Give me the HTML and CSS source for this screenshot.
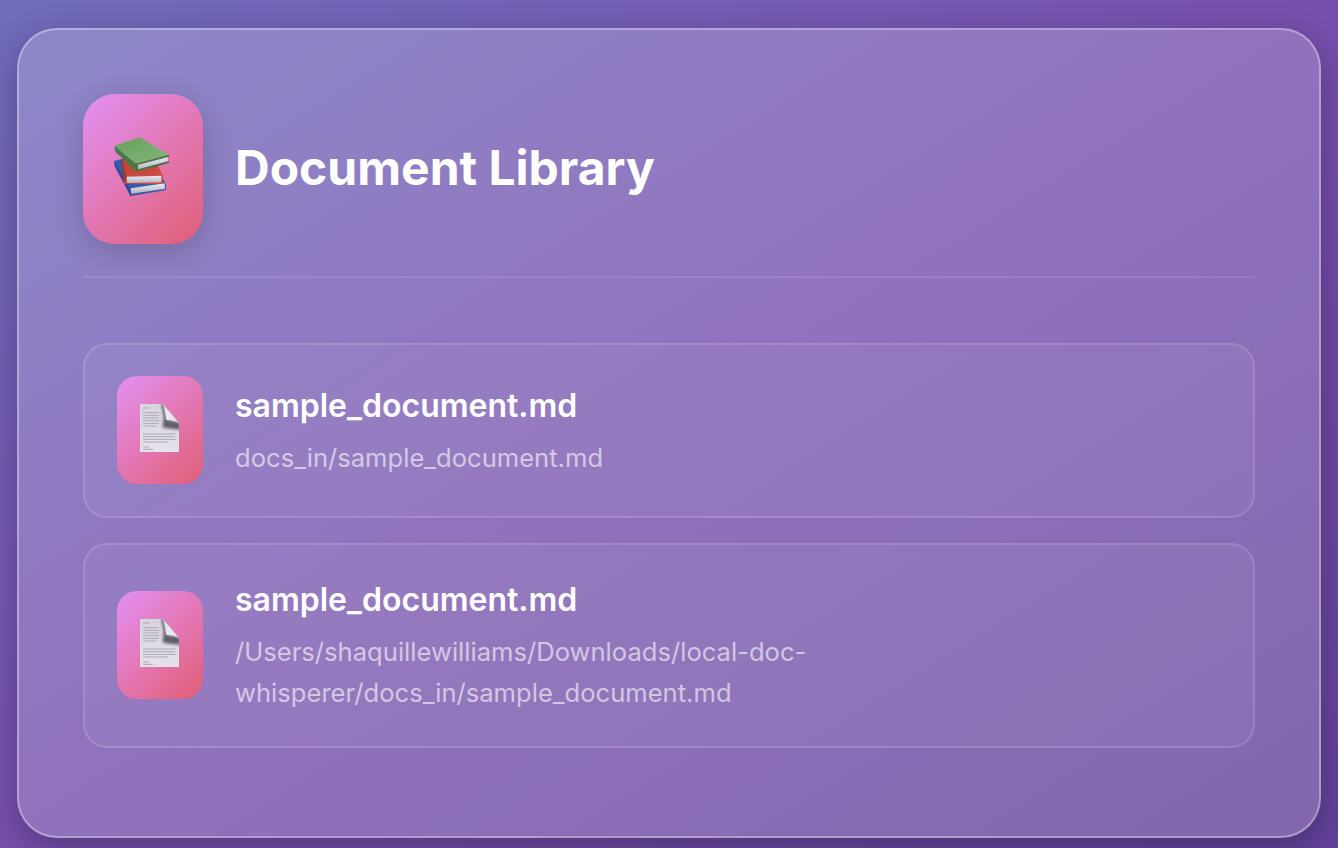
FILE: index.html
```
<!DOCTYPE html>
<html lang="en">
<head>
<meta charset="utf-8">
<title>Document Library</title>
<link rel="stylesheet" href="styles.css">
</head>
<body>
<main class="panel">
  <header class="head">
    <div class="badge badge-lg">
      <svg class="books" viewBox="0 0 198 210" width="66" height="70" aria-hidden="true">
        <defs>
          <linearGradient id="gr" x1="0" y1="0" x2="1" y2="1"><stop offset="0" stop-color="#5fa64e"/><stop offset="1" stop-color="#86bd70"/></linearGradient>
          <linearGradient id="pg" x1="0" y1="0" x2="0" y2="1"><stop offset="0" stop-color="#f8f8f8"/><stop offset="1" stop-color="#bcbcbc"/></linearGradient>
          <linearGradient id="re" x1="0" y1="0" x2="1" y2="1"><stop offset="0" stop-color="#c23a25"/><stop offset="1" stop-color="#dc4a35"/></linearGradient>
          <filter id="edge" x="-5%" y="-5%" width="110%" height="110%"><feGaussianBlur stdDeviation="0.8"/></filter>
        </defs>
        <g filter="url(#edge)">
          <path d="M18 84 L42 78 L160 128 L174 154 L174 171 L66 190 L60 172 Z" fill="#2d52aa"/>
          <path d="M18 84 L66 170 L68 190 L20 100 Z" fill="#213d8c"/>
          <path d="M68 166 L170 151 L171 167 L70 182 Z" fill="url(#pg)"/>
          <path d="M42 76 L150 98 L165 128 L164 153 L48 152 Z" fill="url(#re)"/>
          <path d="M42 76 L56 131 L48 152 L41 98 Z" fill="#a42e1d"/>
          <path d="M56 131 L160 128 L160 148 L58 150 Z" fill="url(#pg)"/>
          <path d="M20 38 L95 13 L183 65 L83 92 Z" fill="url(#gr)"/>
          <path d="M20 38 L83 92 L85 116 L22 56 Z" fill="#3c7a33"/>
          <path d="M85 95 L179 71 L179 85 L88 111 Z" fill="url(#pg)"/>
          <path d="M83 92 L183 65 L183 71 L90 95 L90 109 L183 84 L183 90 L85 116 Z" fill="#3a7631"/>
        </g>
      </svg>
    </div>
    <h1 class="title">Document Library</h1>
  </header>
  <section class="list">
    <article class="item">
      <div class="badge badge-sm">
        <svg class="doc" viewBox="0 0 150 168" width="50" height="56" aria-hidden="true">
          <defs>
            <linearGradient id="pa" x1="0" y1="0" x2="0" y2="1"><stop offset="0" stop-color="#e2e2e2"/><stop offset="1" stop-color="#f1f1f1"/></linearGradient>
            <filter id="soft" x="-30%" y="-30%" width="160%" height="160%"><feGaussianBlur stdDeviation="5"/></filter>
            <filter id="softer" x="-5%" y="-5%" width="110%" height="110%"><feGaussianBlur stdDeviation="2"/></filter>
            <clipPath id="pc"><path d="M15 12 H84 L132 68 V156 H15 Z"/></clipPath>
            <g id="docpage">
              <path d="M15 12 H84 L132 68 V156 H15 Z" fill="url(#pa)"/>
              <path d="M24 24 H44 M24 38 H72 M24 46 H74 M24 54 H70 M24 62 H76 M24 70 H72 M24 78 H66 M24 102 H124 M24 110 H120 M24 118 H124 M24 126 H100 M24 141 H42 M24 148 H54" stroke="#a8a8a8" stroke-width="2.6" fill="none" filter="url(#softer)"/>
              <g clip-path="url(#pc)">
                <path d="M78 12 H96 C92 30 94 48 98 60 L136 66 V90 C116 86 98 88 82 82 C88 60 86 34 78 12 Z" fill="#5a5a5a" filter="url(#soft)"/>
              </g>
              <path d="M84 13 C90 32 92 50 94 60 C110 59 124 63 132 71 Z" fill="#f6f6f6"/>
            </g>
          </defs>
          <use href="#docpage"/>
        </svg>
      </div>
      <div class="meta">
        <h2 class="name">sample_document.md</h2>
        <p class="path">docs_in/sample_document.md</p>
      </div>
    </article>
    <article class="item">
      <div class="badge badge-sm">
        <svg class="doc" viewBox="0 0 150 168" width="50" height="56" aria-hidden="true">
          <use href="#docpage"/>
        </svg>
      </div>
      <div class="meta">
        <h2 class="name">sample_document.md</h2>
        <p class="path">/Users/shaquillewilliams/Downloads/local-doc-whisperer/docs_in/sample_document.md</p>
      </div>
    </article>
  </section>
</main>
</body>
</html>
```
FILE: styles.css
```
* { box-sizing: border-box; }
html, body { height: 100%; }
body {
  margin: 0;
  padding: 28px 17px 10px;
  overflow: hidden;
  font-family: Inter, "Liberation Sans", sans-serif;
  color: #fff;
  background: linear-gradient(148deg, #706cbc 0%, #7650ad 48%, #62419a 100%);
}
.panel {
  height: 810px;
  padding: 64px;
  border: 2px solid rgba(255, 255, 255, 0.33);
  border-radius: 40px;
  background: rgba(255, 255, 255, 0.2);
  box-shadow: 0 10px 32px rgba(0, 0, 0, 0.28);
}
.head {
  display: flex;
  align-items: center;
  gap: 32px;
  padding-bottom: 32px;
  border-bottom: 2px solid rgba(255, 255, 255, 0.1);
}
.badge {
  display: flex;
  flex: none;
  align-items: center;
  justify-content: center;
  background: linear-gradient(135deg, #f093fb 0%, #ee5a6a 100%);
  opacity: 0.87;
}
.badge-lg {
  width: 120px;
  height: 150px;
  border-radius: 32px;
  box-shadow: 0 8px 32px rgba(0, 0, 0, 0.2);
}
.badge-sm {
  width: 86px;
  height: 108px;
  border-radius: 20px;
}
.books {
  margin: 0 4px 2px 0;
}
.doc {
  margin-bottom: 4px;
}
.title {
  margin: 0 0 2px;
  font-size: 48px;
  font-weight: 700;
  line-height: 1.2;
}
.list {
  display: flex;
  flex-direction: column;
  gap: 25px;
  margin-top: 64.6px;
}
.item {
  display: flex;
  align-items: center;
  gap: 32px;
  padding: 31.6px 32px;
  border: 2px solid rgba(255, 255, 255, 0.13);
  border-radius: 24px;
  background: rgba(255, 255, 255, 0.05);
}
.meta { max-width: 640px; }
.name {
  margin: 0 0 8px;
  font-size: 32px;
  font-weight: 600;
  line-height: 1.5;
}
.path {
  margin: 0;
  font-size: 25.6px;
  line-height: 1.6;
  color: rgba(255, 255, 255, 0.6);
}
```
